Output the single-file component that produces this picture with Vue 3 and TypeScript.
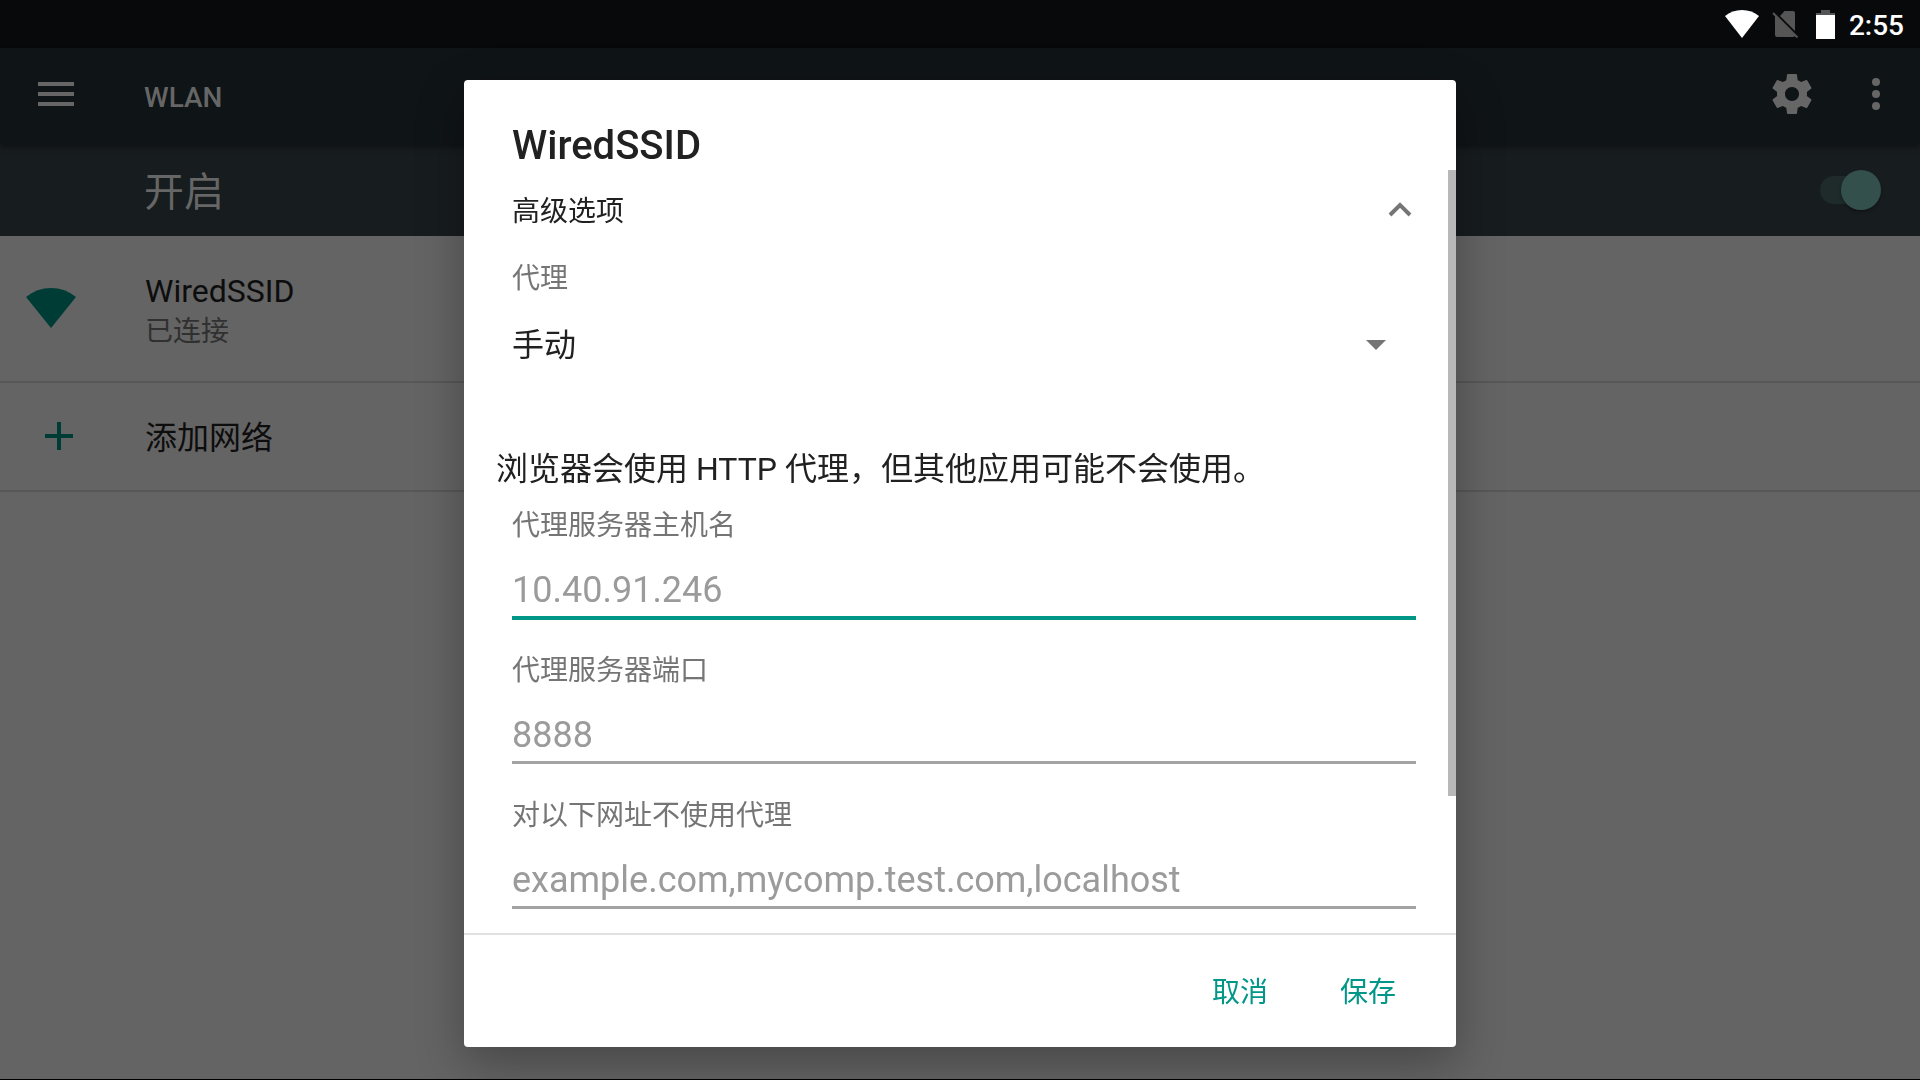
<script setup lang="ts">
import { reactive, ref } from 'vue'

interface ProxyField {
  id: 'host' | 'port' | 'bypass'
  label: string
  hint: string
}

const fields: ProxyField[] = [
  { id: 'host', label: '代理服务器主机名', hint: '10.40.91.246' },
  { id: 'port', label: '代理服务器端口', hint: '8888' },
  { id: 'bypass', label: '对以下网址不使用代理', hint: 'example.com,mycomp.test.com,localhost' },
]

const values = reactive<Record<ProxyField['id'], string>>({ host: '', port: '', bypass: '' })
const activeField = ref<ProxyField['id']>('host')
const wlanOn = ref(true)
const proxyMode = ref('manual')
</script>

<template>
  <div class="screen">
    <header class="status">
      <svg class="status-wifi" viewBox="0 0 34 28" aria-hidden="true">
        <path d="M0 6Q7 0 17 0T34 6L17 28Z" fill="#fff" />
      </svg>
      <svg class="status-sim" viewBox="0 0 27 28" aria-hidden="true">
        <path d="M3 5V25a2 2 0 0 0 2 2H21a2 2 0 0 0 2-1.500Z" fill="#555" />
        <path d="M8 6L12.500 1H21a2 2 0 0 1 2 2V21Z" fill="#555" />
        <path d="M1 3L25.500 27.500" stroke="#555" stroke-width="2" />
      </svg>
      <svg class="status-battery" viewBox="0 0 19 29" aria-hidden="true">
        <path d="M5 0h9v3h5v3H0V3h5Z" fill="#555" />
        <path d="M0 5h19v24H0Z" fill="#fff" />
      </svg>
      <time class="clock">2:55</time>
    </header>

    <div class="toolbar">
      <button class="icon-button" type="button" aria-label="菜单">
        <svg viewBox="0 0 24 24"><path d="M3 18h18v-2H3v2zm0-5h18v-2H3v2zm0-7v2h18V6H3z" /></svg>
      </button>
      <h1 class="toolbar-title">WLAN</h1>
      <button class="icon-button" type="button" aria-label="设置">
        <svg viewBox="0 0 24 24">
          <path d="M19.430 12.980c.040-.320.070-.640.070-.980s-.030-.660-.070-.980l2.110-1.650c.190-.150.240-.420.120-.640l-2-3.460c-.120-.220-.390-.300-.610-.220l-2.490 1c-.520-.400-1.080-.730-1.690-.980l-.380-2.650C14.460 2.180 14.250 2 14 2h-4c-.250 0-.460.180-.490.420l-.380 2.650c-.610.250-1.170.590-1.690.980l-2.490-1c-.230-.090-.490 0-.610.220l-2 3.460c-.130.220-.070.490.120.640l2.110 1.650c-.040.320-.070.650-.070.980s.030.660.070.980l-2.110 1.650c-.190.150-.240.420-.120.640l2 3.460c.120.220.390.300.610.220l2.490-1c.520.400 1.080.730 1.690.980l.380 2.650c.030.240.240.420.490.420h4c.250 0 .460-.180.490-.420l.380-2.650c.610-.250 1.170-.590 1.690-.980l2.490 1c.230.090.490 0 .610-.220l2-3.460c.120-.220.070-.490-.120-.640l-2.110-1.650zM12 15.500c-1.930 0-3.500-1.570-3.500-3.500s1.570-3.500 3.500-3.500 3.500 1.570 3.500 3.500-1.570 3.500-3.500 3.500z" />
        </svg>
      </button>
      <button class="icon-button more" type="button" aria-label="更多选项">
        <svg viewBox="0 0 24 24"><circle cx="12" cy="6" r="2" /><circle cx="12" cy="12" r="2" /><circle cx="12" cy="18" r="2" /></svg>
      </button>
    </div>

    <label class="switch-bar">
      <span>开启</span>
      <input v-model="wlanOn" class="switch" type="checkbox" />
    </label>

    <ul class="networks">
      <li class="network">
        <svg class="network-wifi" viewBox="0 0 50 40" aria-hidden="true">
          <path d="M0 9Q11 0 25 0T50 9L25 40Z" />
        </svg>
        <div class="network-text">
          <p class="network-name">WiredSSID</p>
          <p class="network-state">已连接</p>
        </div>
      </li>
      <li class="network add">
        <svg class="network-plus" viewBox="0 0 28 28" aria-hidden="true">
          <path d="M12 0h4v12h12v4H16v12h-4V16H0v-4h12Z" />
        </svg>
        <p class="network-name">添加网络</p>
      </li>
    </ul>

    <div class="overlay">
      <form class="dialog" role="dialog" aria-labelledby="dialog-title" @submit.prevent>
        <h2 id="dialog-title" class="dialog-title">WiredSSID</h2>
        <div class="dialog-body">
          <button class="advanced" type="button" aria-expanded="true">
            <span>高级选项</span>
            <svg class="chevron" viewBox="0 0 24 16" aria-hidden="true">
              <path d="M2 13L12 3L22 13" fill="none" stroke="#757575" stroke-width="4" />
            </svg>
          </button>
          <label class="field-label" for="proxy-mode">代理</label>
          <div class="select-row">
            <select id="proxy-mode" v-model="proxyMode" class="mode">
              <option value="manual">手动</option>
            </select>
            <svg class="caret" viewBox="0 0 20 10" aria-hidden="true"><path d="M0 0H20L10 10Z" fill="#757575" /></svg>
          </div>
          <p class="notice">浏览器会使用 HTTP 代理，但其他应用可能不会使用。</p>
          <div v-for="field in fields" :key="field.id" class="field">
            <label class="field-label" :for="field.id">{{ field.label }}</label>
            <input
              :id="field.id"
              v-model="values[field.id]"
              class="field-input"
              :class="{ active: activeField === field.id }"
              type="text"
              :placeholder="field.hint"
              @focus="activeField = field.id"
            />
          </div>
          <span class="scroll-thumb" aria-hidden="true"></span>
        </div>
        <footer class="actions">
          <button class="action" type="button">取消</button>
          <button class="action" type="submit">保存</button>
        </footer>
      </form>
    </div>
  </div>
</template>

<style>
body {
  margin: 0;
  background: #646464;
}
</style>

<style scoped>
* {
  box-sizing: border-box;
}

h1,
h2,
p,
ul {
  margin: 0;
  padding: 0;
}

button,
input,
select {
  margin: 0;
  padding: 0;
  border: 0;
  border-radius: 0;
  outline: 0;
  background: none;
  font: inherit;
  color: inherit;
}

svg {
  display: block;
  flex: none;
}

.screen {
  display: flex;
  flex-direction: column;
  min-height: 100vh;
  border-bottom: 1px solid #000;
  background: #646464;
  font-family: Roboto, "Noto Sans CJK SC", sans-serif;
  font-size: 28px;
  line-height: 40px;
}

.status {
  display: flex;
  justify-content: flex-end;
  align-items: center;
  height: 48px;
  padding-right: 16px;
  background: #07090a;
}

.status-wifi {
  width: 34px;
  height: 28px;
  margin-right: 13px;
}

.status-sim {
  width: 27px;
  height: 28px;
  margin-right: 17px;
}

.status-battery {
  width: 19px;
  height: 29px;
  margin-right: 14px;
}

.clock {
  padding-top: 3px;
  color: #fff;
  font-weight: 500;
}

.toolbar {
  position: relative;
  display: flex;
  align-items: center;
  height: 96px;
  padding: 0 20px 4px 32px;
  background: #0f1416;
  box-shadow: 0 3px 6px rgba(0, 0, 0, 0.4);
  color: #666;
}

.icon-button {
  width: 48px;
  height: 48px;
}

.icon-button svg {
  width: 48px;
  height: 48px;
  fill: #666;
}

.more {
  margin-left: 36px;
}

.toolbar-title {
  flex: 1;
  padding: 8px 0 0 64px;
  font-size: 28px;
  font-weight: 500;
}

.switch-bar {
  display: flex;
  justify-content: space-between;
  align-items: center;
  height: 92px;
  padding: 0 40px 0 144px;
  background: #171c1f;
  color: #666;
  font-size: 40px;
}

.switch-bar span {
  padding-top: 6px;
}

.switch {
  position: relative;
  width: 60px;
  height: 28px;
  appearance: none;
  border-radius: 14px;
  background: #1f2a2b;
}

.switch::before {
  content: "";
  position: absolute;
  top: -6px;
  right: -1px;
  width: 40px;
  height: 40px;
  border-radius: 50%;
  background: #34504d;
  box-shadow: 0 2px 3px rgba(0, 0, 0, 0.3);
}

.networks {
  list-style: none;
}

.network {
  display: flex;
  align-items: center;
  height: 147px;
  padding: 0 0 2px 26px;
  border-bottom: 2px solid #575757;
  color: #0d0d0d;
}

.network svg {
  fill: #003c36;
}

.network-wifi {
  width: 50px;
  height: 40px;
  margin-right: 69px;
}

.network.add {
  height: 109px;
  padding-left: 45px;
}

.network-plus {
  width: 28px;
  height: 28px;
  margin-right: 72px;
}

.network-text {
  padding-top: 8px;
}

.network-name {
  font-size: 32px;
}

.add .network-name {
  padding-top: 4px;
}

.network-state {
  color: #303030;
  line-height: 42px;
}

.overlay {
  position: fixed;
  inset: 0;
  display: flex;
  justify-content: center;
  align-items: flex-start;
  padding: 80px 16px 32px;
}

.dialog {
  display: flex;
  flex-direction: column;
  width: 100%;
  max-width: 992px;
  border-radius: 4px;
  background: #fff;
  box-shadow: 0 16px 48px rgba(0, 0, 0, 0.3);
  color: #212121;
}

.dialog-title {
  padding: 42px 48px 0;
  font-size: 40px;
  font-weight: 500;
  line-height: 48px;
}

.dialog-body {
  position: relative;
  padding: 0 40px 23px 48px;
}

.advanced {
  display: flex;
  justify-content: space-between;
  align-items: center;
  width: 100%;
  height: 80px;
  padding-right: 4px;
}

.advanced span {
  padding-top: 4px;
}

.chevron {
  width: 24px;
  height: 16px;
}

.field-label {
  display: block;
  height: 40px;
  color: #757575;
  line-height: 44px;
}

.advanced + .field-label {
  margin-top: 7px;
}

.select-row {
  position: relative;
  display: flex;
  align-items: center;
  height: 96px;
}

.mode {
  width: 100%;
  height: 64px;
  appearance: none;
  font-size: 32px;
}

.caret {
  position: absolute;
  right: 30px;
  width: 20px;
  height: 10px;
  pointer-events: none;
}

.notice {
  margin: 56px 0 15px -16px;
  font-size: 32px;
}

.field {
  height: 116px;
}

.field + .field {
  margin-top: 29px;
}

.field-input {
  display: block;
  width: 100%;
  height: 75px;
  padding-top: 20px;
  border-bottom: 3px solid #a3a3a3;
  font-size: 36px;
}

.field-input.active {
  height: 76px;
  border-bottom: 4px solid #009688;
}

.field-input::placeholder {
  color: #9b9b9b;
  opacity: 1;
}

.scroll-thumb {
  position: absolute;
  top: 0;
  right: 0;
  width: 8px;
  height: 82%;
  background: #b8b8b8;
}

.actions {
  display: flex;
  justify-content: flex-end;
  align-items: center;
  height: 114px;
  padding-right: 24px;
  border-top: 2px solid #e0e0e0;
}

.action {
  height: 72px;
  padding: 4px 36px 0;
  color: #009688;
}
</style>
